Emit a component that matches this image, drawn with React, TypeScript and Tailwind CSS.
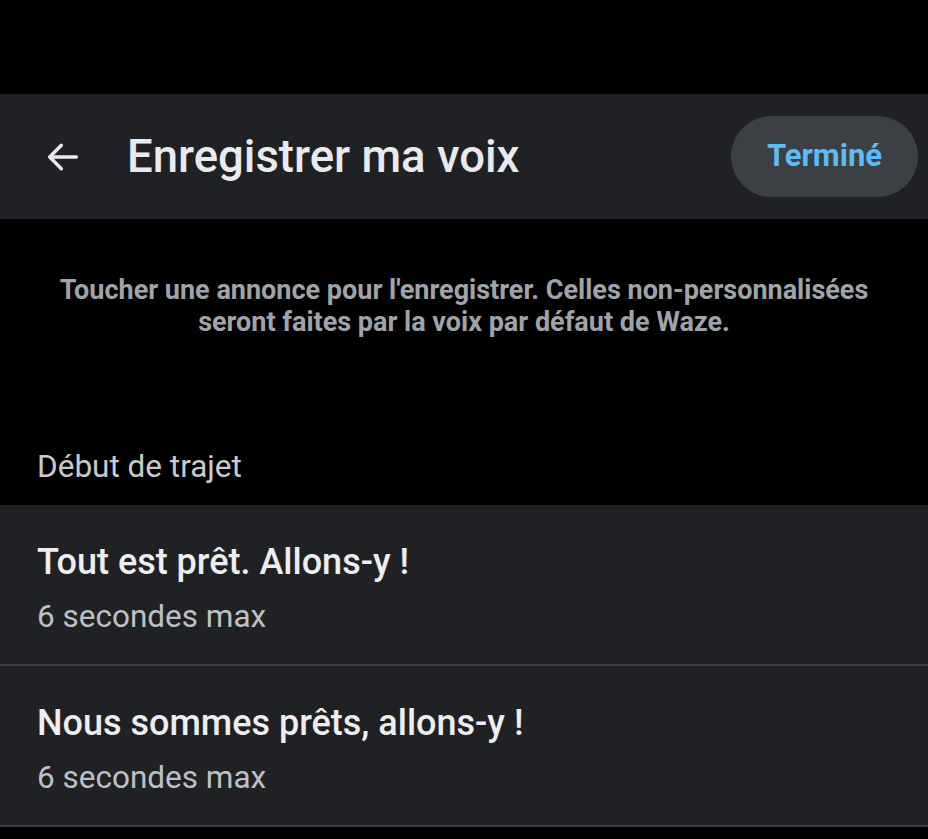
import React from 'react';

const items = [
  { title: 'Tout est prêt. Allons-y !', sub: '6 secondes max' },
  { title: 'Nous sommes prêts, allons-y !', sub: '6 secondes max' },
];

export default function App() {
  return (
    <div className="min-h-[839px] w-[928px] bg-black font-['Roboto','Liberation_Sans',sans-serif] overflow-hidden">
      <div className="h-[94px]" />

      {/* Header */}
      <div className="flex h-[125px] items-center bg-[#202124] pl-[43px] pr-[10px]">
        <svg width="40" height="40" viewBox="0 0 24 24" fill="none" stroke="#e8eaed" strokeWidth="2.1" strokeLinecap="round" strokeLinejoin="round">
          <path d="M20 12H4.5" />
          <path d="M11 5l-7 7 7 7" />
        </svg>
        <h1 className="ml-[44px] flex-1 text-[45.5px] font-medium leading-[50px] text-[#e8eaed]">Enregistrer ma voix</h1>
        <button className="h-[81px] w-[187px] rounded-full bg-[#3c4043] text-[31px] font-bold text-[#5bbcf6]">
          Terminé
        </button>
      </div>

      {/* Intro */}
      <div className="flex h-[286px] flex-col">
        <p className="mt-[55px] px-[20px] text-center text-[27px] font-bold leading-[32px] text-[#a0a3a8]">
          Toucher une annonce pour l'enregistrer. Celles non-personnalisées
          <br />
          seront faites par la voix par défaut de Waze.
        </p>
        <p className="mt-auto mb-[18px] pl-[37px] text-[31.5px] leading-[40px] text-[#c8cacd]">Début de trajet</p>
      </div>

      {/* List */}
      <div className="bg-[#202124]">
        {items.map((it) => (
          <div key={it.title} className="flex h-[161px] flex-col border-b-2 border-[#3c4043] pl-[37px] pt-[36px]">
            <p className="text-[36px] font-medium leading-[42px] text-[#eeeef0]">{it.title}</p>
            <p className="mt-[15px] text-[31.5px] leading-[38px] text-[#bdc1c6]">{it.sub}</p>
          </div>
        ))}
      </div>
    </div>
  );
}
